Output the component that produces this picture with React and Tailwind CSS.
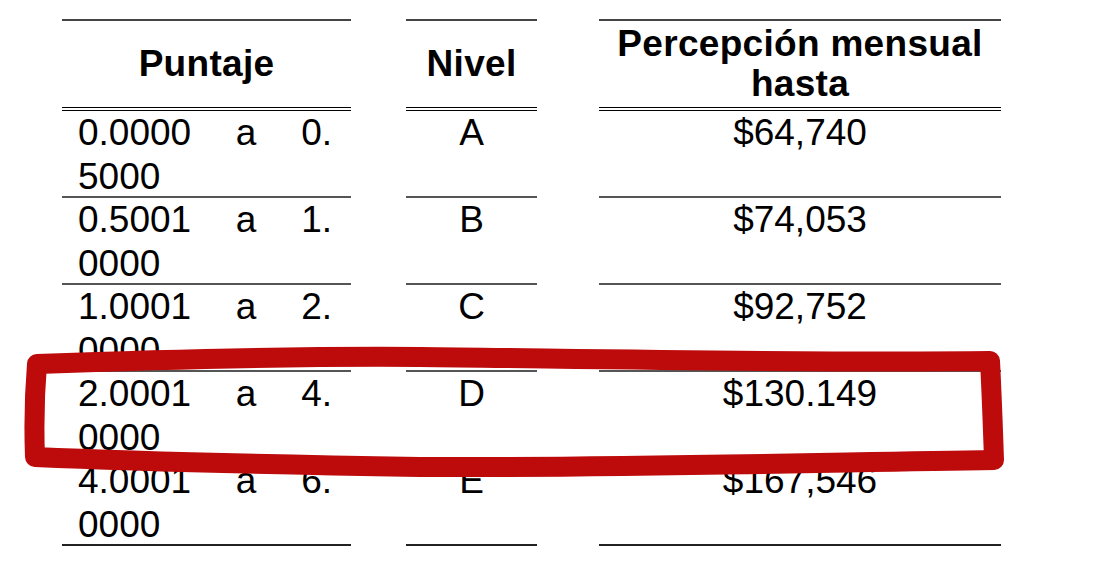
import React from "react";

const rows = [
  { from: "0.0000", to: "0.", rest: "5000", level: "A", pay: "$64,740" },
  { from: "0.5001", to: "1.", rest: "0000", level: "B", pay: "$74,053" },
  { from: "1.0001", to: "2.", rest: "0000", level: "C", pay: "$92,752" },
  { from: "2.0001", to: "4.", rest: "0000", level: "D", pay: "$130.149" },
  { from: "4.0001", to: "6.", rest: "0000", level: "E", pay: "$167,546" },
];

const App = () => {
  return (
    <div className="relative w-[1099px] h-[571px] bg-white overflow-hidden font-['Liberation_Sans',Arial,sans-serif] text-black text-[37px]">
      <div className="pt-[19px] pl-[62px]">
        <div className="grid grid-cols-[344px_193px_402px]">
          {/* header */}
          <div className="h-[92px] mr-[55px] border-t-2 border-[#444] border-b-4 border-b-black border-double flex items-center justify-center font-bold leading-[40px] tracking-[0.3px]">
            Puntaje
          </div>
          <div className="h-[92px] mr-[62px] border-t-2 border-[#444] border-b-4 border-b-black border-double flex items-center justify-center font-bold leading-[40px] tracking-[0.3px]">
            Nivel
          </div>
          <div className="h-[92px] border-t-2 border-[#444] border-b-4 border-b-black border-double flex items-center justify-center text-center font-bold leading-[40px] tracking-[0.3px]">
            Percepción mensual
            <br />
            hasta
          </div>

          {rows.map((r, i) => (
            <React.Fragment key={r.level}>
              <div
                className={`h-[87px] mr-[55px] border-b-2 pl-4 pr-[19px] leading-[44px] ${
                  i === rows.length - 1 ? "border-[#222]" : "border-[#555]"
                }`}
              >
                <div className="flex justify-between">
                  <span>{r.from}</span>
                  <span>a</span>
                  <span>{r.to}</span>
                </div>
                <div>{r.rest}</div>
              </div>
              <div
                className={`h-[87px] mr-[62px] border-b-2 text-center leading-[44px] ${
                  i === rows.length - 1 ? "border-[#222]" : "border-[#555]"
                }`}
              >
                {r.level}
              </div>
              <div
                className={`h-[87px] border-b-2 text-center leading-[44px] ${
                  i === rows.length - 1 ? "border-[#222]" : "border-[#555]"
                }`}
              >
                {r.pay}
              </div>
            </React.Fragment>
          ))}
        </div>
      </div>

      {/* hand-drawn highlight */}
      <svg
        className="absolute inset-0 pointer-events-none"
        width="1099"
        height="571"
        viewBox="0 0 1099 571"
      >
        <path
          d="M 35 457 C 34 430, 34 400, 37 364 C 150 360, 300 356, 420 357 C 600 359, 800 363, 990 361 C 992 400, 993 430, 994 460 C 800 463, 600 468, 420 467 C 300 465, 150 462, 35 457 Z"
          fill="none"
          stroke="#bd0a0b"
          strokeWidth="20"
          strokeLinejoin="round"
          strokeLinecap="round"
        />
      </svg>
    </div>
  );
};

export default App;
